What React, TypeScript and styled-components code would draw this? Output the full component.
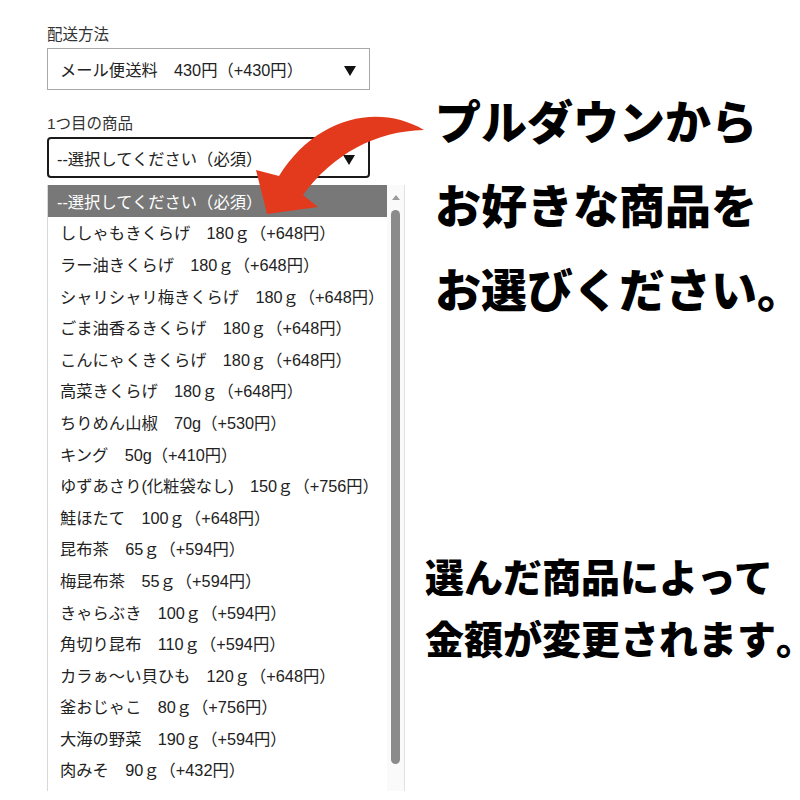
import React from "react";
import styled, { createGlobalStyle } from "styled-components";

const Global = createGlobalStyle`
  html, body { margin: 0; padding: 0; background: #fff; }
  body { font-family: "Liberation Sans", "Noto Sans CJK JP", sans-serif; }
`;

const Page = styled.div`
  position: relative;
  width: 800px;
  height: 800px;
  overflow: hidden;
  display: flex;
  background: #fff;
`;

const FormColumn = styled.div`
  width: 358px;
  padding: 26px 0 0 47px;
  display: flex;
  flex-direction: column;
  flex-shrink: 0;
`;

const Label = styled.div<{ $top?: number }>`
  font-size: 15.5px;
  color: #333;
  line-height: 18px;
  margin-top: ${(p) => p.$top ?? 0}px;
  margin-bottom: 4px;
`;

const SelectBox = styled.div<{ $focused?: boolean }>`
  box-sizing: border-box;
  width: 323px;
  height: ${(p) => (p.$focused ? 41 : 42)}px;
  display: flex;
  align-items: center;
  justify-content: space-between;
  padding: 0 13px 0 ${(p) => (p.$focused ? 8 : 12)}px;
  font-size: 16.3px;
  color: #222;
  border: ${(p) => (p.$focused ? "2px solid #1a1a1a" : "1px solid #a8a8a8")};
  border-radius: ${(p) => (p.$focused ? 4 : 0)}px;
  background: #fff;
`;

/* solid down-pointing triangle of the select */
const Caret = styled.span`
  width: 0;
  height: 0;
  margin-top: 4px;
  border-left: 6px solid transparent;
  border-right: 6px solid transparent;
  border-top: 10px solid #111;
`;

const ListBox = styled.div`
  box-sizing: border-box;
  margin-top: 7px;
  width: 358px;
  height: 606px;
  display: flex;
  border-left: 1px solid #d8d8d8;
  background: #fff;
`;

const Options = styled.div`
  flex: 1;
  display: flex;
  flex-direction: column;
  overflow: hidden;
`;

const Option = styled.div<{ $active?: boolean }>`
  height: 31.6px;
  flex-shrink: 0;
  display: flex;
  align-items: center;
  padding-left: ${(p) => (p.$active ? 9 : 12)}px;
  font-size: 16.3px;
  white-space: nowrap;
  color: ${(p) => (p.$active ? "#fff" : "#222")};
  background: ${(p) => (p.$active ? "#787878" : "transparent")};
`;

const Track = styled.div`
  width: 17px;
  flex-shrink: 0;
  display: flex;
  flex-direction: column;
  align-items: center;
  background: #fafafa;
  border-right: 1px solid #e2e2e2;
  padding-top: 10px;
`;

const UpArrow = styled.div`
  width: 0;
  height: 0;
  border-left: 4px solid transparent;
  border-right: 4px solid transparent;
  border-bottom: 5px solid #9a9a9a;
`;

const Thumb = styled.div`
  margin-top: 10px;
  width: 9px;
  height: 554px;
  border-radius: 5px;
  background: #8b8b8b;
`;

const MessageColumn = styled.div`
  flex: 1;
  display: flex;
  flex-direction: column;
  padding-left: 30px;
  font-family: "Noto Sans CJK JP", sans-serif;
  font-weight: 900;
  color: #000;
`;

const Headline = styled.div<{ $size: number; $line: number; $top: number; $shift?: number }>`
  font-size: ${(p) => p.$size}px;
  line-height: ${(p) => p.$line}px;
  margin-top: ${(p) => p.$top}px;
  margin-left: ${(p) => p.$shift ?? 0}px;
  white-space: nowrap;
`;

/* half-width full stop so the line ends where the glyph does */
const Stop = styled.span`
  font-feature-settings: "halt" 1;
`;

const ArrowOverlay = styled.svg`
  position: absolute;
  left: 0;
  top: 0;
  pointer-events: none;
`;

const items = [
  "ししゃもきくらげ　180ｇ（+648円）",
  "ラー油きくらげ　180ｇ（+648円）",
  "シャリシャリ梅きくらげ　180ｇ（+648円）",
  "ごま油香るきくらげ　180ｇ（+648円）",
  "こんにゃくきくらげ　180ｇ（+648円）",
  "高菜きくらげ　180ｇ（+648円）",
  "ちりめん山椒　70g（+530円）",
  "キング　50g（+410円）",
  "ゆずあさり(化粧袋なし)　150ｇ（+756円）",
  "鮭ほたて　100ｇ（+648円）",
  "昆布茶　65ｇ（+594円）",
  "梅昆布茶　55ｇ（+594円）",
  "きゃらぶき　100ｇ（+594円）",
  "角切り昆布　110ｇ（+594円）",
  "カラぁ～い貝ひも　120ｇ（+648円）",
  "釜おじゃこ　80ｇ（+756円）",
  "大海の野菜　190ｇ（+594円）",
  "肉みそ　90ｇ（+432円）",
];

export default function App() {
  return (
    <Page>
      <Global />
      <FormColumn>
        <Label>配送方法</Label>
        <SelectBox>
          <span>メール便送料　430円（+430円）</span>
          <Caret />
        </SelectBox>
        <Label $top={25}>1つ目の商品</Label>
        <SelectBox $focused>
          <span>--選択してください（必須）</span>
          <Caret />
        </SelectBox>
        <ListBox>
          <Options>
            <Option $active>--選択してください（必須）</Option>
            {items.map((t) => (
              <Option key={t}>{t}</Option>
            ))}
          </Options>
          <Track>
            <UpArrow />
            <Thumb />
          </Track>
        </ListBox>
      </FormColumn>
      <MessageColumn>
        <Headline $size={46} $line={84} $top={77}>プルダウンから</Headline>
        <Headline $size={46} $line={84} $top={0}>お好きな商品を</Headline>
        <Headline $size={46} $line={84} $top={0}>
          お選びください<Stop>。</Stop>
        </Headline>
        <Headline $size={39} $line={62} $top={215} $shift={-10}>選んだ商品によって</Headline>
        <Headline $size={39} $line={62} $top={0} $shift={-10}>
          金額が変更されます<Stop>。</Stop>
        </Headline>
      </MessageColumn>
      <ArrowOverlay width="800" height="800" viewBox="0 0 800 800">
        <path
          d="M 424 130 C 378 103, 316 117, 279 176 L 256 170 L 267 214 L 318 207 L 303 195 C 333 154, 376 131, 424 130 Z"
          fill="#e33a1d"
        />
      </ArrowOverlay>
    </Page>
  );
}
